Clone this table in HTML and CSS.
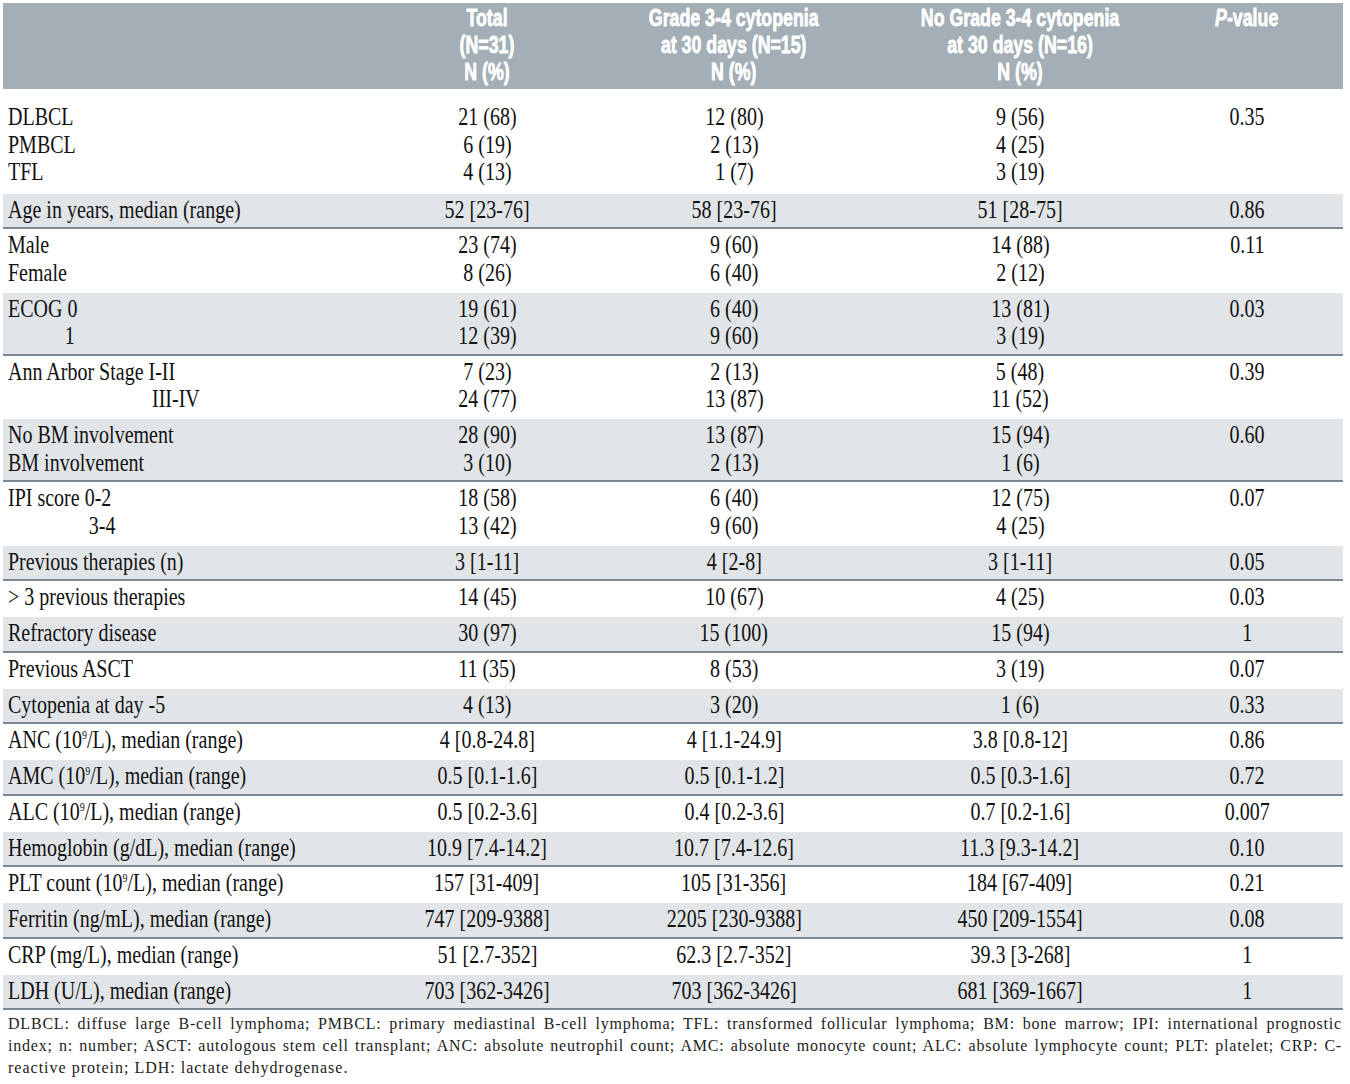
FILE: index.html
```html
<!DOCTYPE html>
<html lang="en">
<head>
<meta charset="utf-8">
<title>Patient characteristics</title>
<link rel="stylesheet" href="styles.css">
</head>
<body>
<div class="page">
<table class="tbl">
<colgroup>
<col class="c-label"><col class="c-tot"><col class="c-g"><col class="c-ng"><col class="c-p">
</colgroup>
<thead>
<tr>
<th></th>
<th><div class="hc"><span class="ht">Total<br>(N=31)<br>N (%)</span></div></th>
<th><div class="hc"><span class="ht">Grade 3-4 cytopenia<br>at 30 days (N=15)<br>N (%)</span></div></th>
<th><div class="hc"><span class="ht">No Grade 3-4 cytopenia<br>at 30 days (N=16)<br>N (%)</span></div></th>
<th><div class="hc"><span class="ht"><i>P</i>-value</span></div></th>
</tr>
</thead>
<tbody>
<tr class="first">
<td class="l"><span class="t">DLBCL<br>PMBCL<br>TFL</span></td>
<td><span class="t">21 (68)<br>6 (19)<br>4 (13)</span></td>
<td><span class="t">12 (80)<br>2 (13)<br>1 (7)</span></td>
<td><span class="t">9 (56)<br>4 (25)<br>3 (19)</span></td>
<td><span class="t">0.35</span></td>
</tr>
<tr class="g">
<td class="l"><span class="t">Age in years, median (range)</span></td>
<td><span class="t">52 [23-76]</span></td>
<td><span class="t">58 [23-76]</span></td>
<td><span class="t">51 [28-75]</span></td>
<td><span class="t">0.86</span></td>
</tr>
<tr>
<td class="l"><span class="t">Male<br>Female</span></td>
<td><span class="t">23 (74)<br>8 (26)</span></td>
<td><span class="t">9 (60)<br>6 (40)</span></td>
<td><span class="t">14 (88)<br>2 (12)</span></td>
<td><span class="t">0.11</span></td>
</tr>
<tr class="g">
<td class="l"><span class="t">ECOG 0<br><span class="ind-ecog">1</span></span></td>
<td><span class="t">19 (61)<br>12 (39)</span></td>
<td><span class="t">6 (40)<br>9 (60)</span></td>
<td><span class="t">13 (81)<br>3 (19)</span></td>
<td><span class="t">0.03</span></td>
</tr>
<tr>
<td class="l"><span class="t">Ann Arbor Stage I-II<br><span class="ind-ann">III-IV</span></span></td>
<td><span class="t">7 (23)<br>24 (77)</span></td>
<td><span class="t">2 (13)<br>13 (87)</span></td>
<td><span class="t">5 (48)<br>11 (52)</span></td>
<td><span class="t">0.39</span></td>
</tr>
<tr class="g">
<td class="l"><span class="t">No BM involvement<br>BM involvement</span></td>
<td><span class="t">28 (90)<br>3 (10)</span></td>
<td><span class="t">13 (87)<br>2 (13)</span></td>
<td><span class="t">15 (94)<br>1 (6)</span></td>
<td><span class="t">0.60</span></td>
</tr>
<tr>
<td class="l"><span class="t">IPI score 0-2<br><span class="ind-ipi">3-4</span></span></td>
<td><span class="t">18 (58)<br>13 (42)</span></td>
<td><span class="t">6 (40)<br>9 (60)</span></td>
<td><span class="t">12 (75)<br>4 (25)</span></td>
<td><span class="t">0.07</span></td>
</tr>
<tr class="g">
<td class="l"><span class="t">Previous therapies (n)</span></td>
<td><span class="t">3 [1-11]</span></td>
<td><span class="t">4 [2-8]</span></td>
<td><span class="t">3 [1-11]</span></td>
<td><span class="t">0.05</span></td>
</tr>
<tr>
<td class="l"><span class="t">&gt; 3 previous therapies</span></td>
<td><span class="t">14 (45)</span></td>
<td><span class="t">10 (67)</span></td>
<td><span class="t">4 (25)</span></td>
<td><span class="t">0.03</span></td>
</tr>
<tr class="g">
<td class="l"><span class="t">Refractory disease</span></td>
<td><span class="t">30 (97)</span></td>
<td><span class="t">15 (100)</span></td>
<td><span class="t">15 (94)</span></td>
<td><span class="t">1</span></td>
</tr>
<tr>
<td class="l"><span class="t">Previous ASCT</span></td>
<td><span class="t">11 (35)</span></td>
<td><span class="t">8 (53)</span></td>
<td><span class="t">3 (19)</span></td>
<td><span class="t">0.07</span></td>
</tr>
<tr class="g">
<td class="l"><span class="t">Cytopenia at day -5</span></td>
<td><span class="t">4 (13)</span></td>
<td><span class="t">3 (20)</span></td>
<td><span class="t">1 (6)</span></td>
<td><span class="t">0.33</span></td>
</tr>
<tr>
<td class="l"><span class="t">ANC (10<sup>9</sup>/L), median (range)</span></td>
<td><span class="t">4 [0.8-24.8]</span></td>
<td><span class="t">4 [1.1-24.9]</span></td>
<td><span class="t">3.8 [0.8-12]</span></td>
<td><span class="t">0.86</span></td>
</tr>
<tr class="g">
<td class="l"><span class="t">AMC (10<sup>9</sup>/L), median (range)</span></td>
<td><span class="t">0.5 [0.1-1.6]</span></td>
<td><span class="t">0.5 [0.1-1.2]</span></td>
<td><span class="t">0.5 [0.3-1.6]</span></td>
<td><span class="t">0.72</span></td>
</tr>
<tr>
<td class="l"><span class="t">ALC (10<sup>9</sup>/L), median (range)</span></td>
<td><span class="t">0.5 [0.2-3.6]</span></td>
<td><span class="t">0.4 [0.2-3.6]</span></td>
<td><span class="t">0.7 [0.2-1.6]</span></td>
<td><span class="t">0.007</span></td>
</tr>
<tr class="g">
<td class="l"><span class="t">Hemoglobin (g/dL), median (range)</span></td>
<td><span class="t">10.9 [7.4-14.2]</span></td>
<td><span class="t">10.7 [7.4-12.6]</span></td>
<td><span class="t">11.3 [9.3-14.2]</span></td>
<td><span class="t">0.10</span></td>
</tr>
<tr>
<td class="l"><span class="t">PLT count (10<sup>9</sup>/L), median (range)</span></td>
<td><span class="t">157 [31-409]</span></td>
<td><span class="t">105 [31-356]</span></td>
<td><span class="t">184 [67-409]</span></td>
<td><span class="t">0.21</span></td>
</tr>
<tr class="g">
<td class="l"><span class="t">Ferritin (ng/mL), median (range)</span></td>
<td><span class="t">747 [209-9388]</span></td>
<td><span class="t">2205 [230-9388]</span></td>
<td><span class="t">450 [209-1554]</span></td>
<td><span class="t">0.08</span></td>
</tr>
<tr>
<td class="l"><span class="t">CRP (mg/L), median (range)</span></td>
<td><span class="t">51 [2.7-352]</span></td>
<td><span class="t">62.3 [2.7-352]</span></td>
<td><span class="t">39.3 [3-268]</span></td>
<td><span class="t">1</span></td>
</tr>
<tr class="g">
<td class="l"><span class="t">LDH (U/L), median (range)</span></td>
<td><span class="t">703 [362-3426]</span></td>
<td><span class="t">703 [362-3426]</span></td>
<td><span class="t">681 [369-1667]</span></td>
<td><span class="t">1</span></td>
</tr>
</tbody>
</table>
<p class="note">
<span class="ln">DLBCL: diffuse large B-cell lymphoma; PMBCL: primary mediastinal B-cell lymphoma; TFL: transformed follicular lymphoma; BM: bone marrow; IPI: international prognostic</span>
<span class="ln">index; n: number; ASCT: autologous stem cell transplant; ANC: absolute neutrophil count; AMC: absolute monocyte count; ALC: absolute lymphocyte count; PLT: platelet; CRP: C-</span>
<span class="ln last">reactive protein; LDH: lactate dehydrogenase.</span>
</p>
</div>
</body>
</html>
```

FILE: styles.css
```css
* { box-sizing: border-box; }
html, body { margin: 0; background: #fff; }

.page { width: 1350px; padding: 3px 7px 0 3px; }

.tbl {
  width: 1340px;
  border-collapse: collapse;
  table-layout: fixed;
  font-family: "Liberation Serif", "Times New Roman", serif;
  font-size: 25px;
  line-height: 27.5px;
  color: #111;
}
col.c-label { width: 392px; }
col.c-tot { width: 184px; }
col.c-g { width: 310px; }
col.c-ng { width: 262px; }
col.c-p { width: 192px; }

thead th {
  background: #a3aeb6;
  color: #fff;
  font-family: "Liberation Sans", Arial, sans-serif;
  font-weight: 700;
  font-size: 24px;
  line-height: 27px;
  padding: 1px 0 4px;
  vertical-align: top;
  height: 86px;
}
thead th i { font-style: italic; }
.hc { display: flex; justify-content: center; }
.ht {
  display: inline-block;
  white-space: nowrap;
  text-align: center;
  -webkit-text-stroke: 0.8px #fff;
  transform: scaleX(.74);
  transform-origin: center top;
}

tbody td {
  vertical-align: top;
  text-align: center;
  padding: 2px 0 6.25px;
}
tbody tr.g td {
  background: #e1e5e8;
  border-bottom: 2px solid #7b8994;
  padding-top: 2px;
  padding-bottom: 4.25px;
}
tbody tr.first td { padding-top: 14px; padding-bottom: 8px; }
tbody td.l { text-align: left; padding-left: 5px; }

.t {
  display: inline-block;
  white-space: nowrap;
  transform: scaleX(.8);
  transform-origin: center top;
}
td.l .t { transform-origin: left top; }

.ind-ecog { margin-left: 71px; }
.ind-ann { margin-left: 180px; }
.ind-ipi { margin-left: 101px; }

sup {
  font-size: 0.5em;
  line-height: 0;
  vertical-align: 0.75em;
}

.note {
  margin: 0;
  padding: 3px 1px 0 5px;
  font-family: "Liberation Serif", "Times New Roman", serif;
  font-size: 16px;
  line-height: 22px;
  letter-spacing: 0.8px;
  color: #222;
}
.note .ln { display: block; text-align: justify; text-align-last: justify; }
.note .ln.last { text-align: left; text-align-last: left; letter-spacing: 1px; }
```
